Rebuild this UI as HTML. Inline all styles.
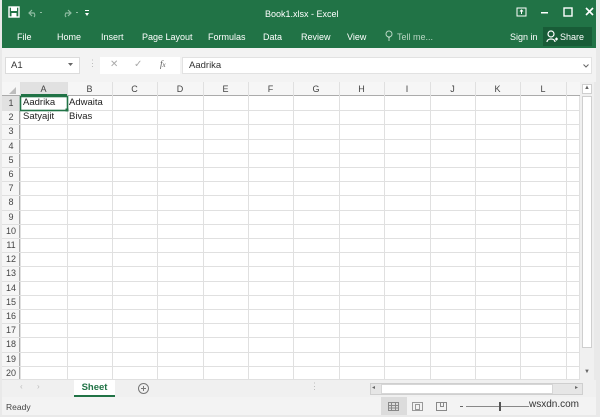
<!DOCTYPE html>
<html><head><style>
*{margin:0;padding:0;box-sizing:border-box}
body{width:600px;height:417px;overflow:hidden;background:#fff;font-family:"Liberation Sans",sans-serif;position:relative}
.a{position:absolute}
.t{color:#fff;font-size:9px;white-space:nowrap}
.ch{position:absolute;top:82px;height:14px;font-size:9px;color:#444;text-align:center;line-height:14px}
.rh{position:absolute;left:2px;width:18px;font-size:9px;color:#444;text-align:center;line-height:14px;height:14px}
.c{position:absolute;font-size:9.5px;color:#222;line-height:14px}
</style></head><body>
<div class="a" style="left:0;top:0;width:600px;height:417px;background:#e9e9e9"></div>
<div class="a" style="left:2px;top:0;width:594px;height:48px;background:#217346"></div>
<svg class="a" style="left:8px;top:6px" width="90" height="14">
<rect x="1" y="1" width="10" height="10" fill="none" stroke="#fff" stroke-width="1.4"/><rect x="3" y="1" width="6" height="4" fill="#fff"/><rect x="3.5" y="7" width="5" height="4" fill="#fff"/>
<path d="M24 4 l-3 3 3 3 M21 7 h5 a3 3 0 0 1 0 4" stroke="#8fbda2" fill="none" stroke-width="1.2"/><rect x="32" y="6" width="2" height="1" fill="#8fbda2"/>
<path d="M60 4 l3 3 -3 3 M63 7 h-5 a3 3 0 0 0 0 4" stroke="#8fbda2" fill="none" stroke-width="1.2"/><rect x="68" y="6" width="2" height="1" fill="#8fbda2"/>
<rect x="77" y="4" width="4" height="1" fill="#fff"/><path d="M77 7h4l-2 3z" fill="#fff"/>
</svg>
<div class="a t" style="left:265px;top:9px">Book1.xlsx - Excel</div>
<svg class="a" style="left:515px;top:6px" width="80" height="14">
<rect x="2" y="2" width="9" height="8" fill="none" stroke="#fff"/><path d="M6.5 4v4M5 5.5l1.5-1.5 1.5 1.5" stroke="#fff" fill="none"/>
<rect x="26" y="6" width="7" height="1.5" fill="#fff"/>
<rect x="49" y="2" width="8" height="8" fill="none" stroke="#fff" stroke-width="1.4"/>
<path d="M71 2l7 7M78 2l-7 7" stroke="#fff" stroke-width="1.6"/>
</svg>
<div class="a t" style="left:17px;top:32px">File</div>
<div class="a t" style="left:57px;top:32px">Home</div>
<div class="a t" style="left:101px;top:32px">Insert</div>
<div class="a t" style="left:142px;top:32px">Page Layout</div>
<div class="a t" style="left:208px;top:32px">Formulas</div>
<div class="a t" style="left:263px;top:32px">Data</div>
<div class="a t" style="left:301px;top:32px">Review</div>
<div class="a t" style="left:347px;top:32px">View</div>
<svg class="a" style="left:385px;top:30px" width="10" height="12"><circle cx="4" cy="4" r="3" fill="none" stroke="#b9d6c4"/><path d="M3 8h2M3 10h2" stroke="#b9d6c4"/></svg>
<div class="a t" style="left:397px;top:32px;color:#b9d6c4">Tell me...</div>
<div class="a t" style="left:510px;top:32px">Sign in</div>
<div class="a" style="left:543px;top:27px;width:49px;height:19px;background:#185c37"></div>
<svg class="a" style="left:546px;top:30px" width="12" height="13"><circle cx="5" cy="4" r="3" fill="none" stroke="#fff" stroke-width="1.2"/><path d="M1 12c0-4 8-4 8 0M9 9h3M10.5 7.5v3" stroke="#fff" fill="none" stroke-width="1.2"/></svg>
<div class="a t" style="left:560px;top:32px">Share</div>
<div class="a" style="left:2px;top:48px;width:594px;height:34px;background:#f3f3f3"></div>
<div class="a" style="left:5px;top:57px;width:75px;height:17px;background:#fff;border:1px solid #dcdcdc"></div>
<div class="a" style="left:11px;top:60px;font-size:9.5px;color:#333">A1</div>
<svg class="a" style="left:68px;top:63px" width="6" height="4"><path d="M0 0h5l-2.5 3z" fill="#666"/></svg>
<div class="a" style="left:88px;top:58px;font-size:9px;color:#bbb">⋮</div>
<div class="a" style="left:100px;top:57px;width:80px;height:17px;background:#fff"></div>
<div class="a" style="left:110px;top:59px;font-size:10px;color:#aaa">✕</div>
<div class="a" style="left:134px;top:59px;font-size:10px;color:#aaa">✓</div>
<div class="a" style="left:160px;top:59px;font-size:9px;color:#555;font-style:italic;font-family:'Liberation Serif',serif">f<span style="font-size:7px">x</span></div>
<div class="a" style="left:182px;top:57px;width:410px;height:17px;background:#fff;border:1px solid #e2e2e2"></div>
<div class="a" style="left:189px;top:60px;font-size:9.5px;color:#333">Aadrika</div>
<svg class="a" style="left:583px;top:64px" width="6" height="4"><path d="M0.5 0.5l2.5 2.5 2.5-2.5" stroke="#666" fill="none"/></svg>
<div class="a" style="left:2px;top:82px;width:578px;height:298px;background:#fff"></div>
<div class="a" style="left:2px;top:82px;width:578px;height:14px;background:#f6f6f6;border-bottom:1px solid #ababab"></div>
<div class="a" style="left:2px;top:96px;width:18px;height:284px;background:#f6f6f6;border-right:1px solid #ababab"></div>
<div class="a" style="left:20px;top:82px;width:47px;height:14px;background:#e1e1e1;border-bottom:2px solid #217346"></div>
<div class="a" style="left:2px;top:96px;width:18px;height:14px;background:#e1e1e1"></div>
<svg class="a" style="left:0;top:82px" width="600" height="300">
<path d="M9 12l7-7v7z" fill="#bdbdbd"/>
<g stroke="#e0e0e0" stroke-width="1">
<path d="M20.5 0V298M67.5 0V298M112.5 0V298M157.5 0V298M203.5 0V298M248.5 0V298M293.5 0V298M339.5 0V298M384.5 0V298M430.5 0V298M475.5 0V298M520.5 0V298M566.5 0V298M579.5 14V298"/>
<path d="M2 28.5H580M2 42.5H580M2 57.5H580M2 71.5H580M2 85.5H580M2 99.5H580M2 113.5H580M2 128.5H580M2 142.5H580M2 156.5H580M2 170.5H580M2 184.5H580M2 199.5H580M2 213.5H580M2 227.5H580M2 241.5H580M2 255.5H580M2 270.5H580M2 284.5H580M2 297.5H580"/>
</g>
<rect x="20.5" y="14.5" width="47" height="14" fill="none" stroke="#217346" stroke-width="1.6"/>
<rect x="65.5" y="26.5" width="3" height="3" fill="#217346"/>
</svg>
<div class="ch" style="left:20px;width:47px">A</div>
<div class="ch" style="left:67px;width:45px">B</div>
<div class="ch" style="left:112px;width:45px">C</div>
<div class="ch" style="left:157px;width:46px">D</div>
<div class="ch" style="left:203px;width:45px">E</div>
<div class="ch" style="left:248px;width:45px">F</div>
<div class="ch" style="left:293px;width:46px">G</div>
<div class="ch" style="left:339px;width:45px">H</div>
<div class="ch" style="left:384px;width:46px">I</div>
<div class="ch" style="left:430px;width:45px">J</div>
<div class="ch" style="left:475px;width:45px">K</div>
<div class="ch" style="left:520px;width:46px">L</div>
<div class="rh" style="top:96px">1</div><div class="rh" style="top:110px">2</div><div class="rh" style="top:124px">3</div><div class="rh" style="top:139px">4</div><div class="rh" style="top:153px">5</div><div class="rh" style="top:167px">6</div><div class="rh" style="top:181px">7</div><div class="rh" style="top:195px">8</div><div class="rh" style="top:210px">9</div><div class="rh" style="top:224px">10</div><div class="rh" style="top:238px">11</div><div class="rh" style="top:252px">12</div><div class="rh" style="top:266px">13</div><div class="rh" style="top:281px">14</div><div class="rh" style="top:295px">15</div><div class="rh" style="top:309px">16</div><div class="rh" style="top:323px">17</div><div class="rh" style="top:337px">18</div><div class="rh" style="top:352px">19</div><div class="rh" style="top:366px">20</div>
<div class="c" style="left:23px;top:96px">Aadrika</div>
<div class="c" style="left:69px;top:96px">Adwaita</div>
<div class="c" style="left:23px;top:110px">Satyajit</div>
<div class="c" style="left:69px;top:110px">Bivas</div>
<div class="a" style="left:580px;top:82px;width:14px;height:298px;background:#f0f0f0"></div>
<div class="a" style="left:582px;top:96px;width:10px;height:252px;background:#fff;border:1px solid #cfcfcf"></div>
<div class="a" style="left:582px;top:84px;width:10px;height:10px;border:1px solid #cfcfcf;background:#fff;font-size:6px;text-align:center;color:#666">▲</div>
<div class="a" style="left:584px;top:369px;font-size:6px;color:#666">▼</div>
<div class="a" style="left:2px;top:380px;width:594px;height:17px;background:#f0f0f0"></div>
<div class="a" style="left:20px;top:382px;font-size:8px;color:#bbb">‹</div>
<div class="a" style="left:37px;top:382px;font-size:8px;color:#bbb">›</div>
<div class="a" style="left:74px;top:380px;width:41px;height:17px;background:#fff;border-bottom:2px solid #217346;font-size:9.5px;font-weight:bold;color:#217346;text-align:center;line-height:16px">Sheet</div>
<svg class="a" style="left:137px;top:382px" width="13" height="13"><circle cx="6.5" cy="6.5" r="5" fill="none" stroke="#777"/><path d="M6.5 4v5M4 6.5h5" stroke="#777"/></svg>
<div class="a" style="left:310px;top:381px;font-size:9px;color:#bbb">⋮</div>
<div class="a" style="left:370px;top:383px;width:213px;height:12px;background:#e6e6e6;border:1px solid #cfcfcf"></div>
<div class="a" style="left:381px;top:384px;width:172px;height:10px;background:#fff;border:1px solid #d6d6d6"></div>
<div class="a" style="left:372px;top:384px;font-size:6px;color:#666">◂</div>
<div class="a" style="left:575px;top:384px;font-size:6px;color:#666">▸</div>
<div class="a" style="left:2px;top:397px;width:594px;height:18px;background:#f3f3f3"></div>
<div class="a" style="left:6px;top:402px;font-size:8.5px;color:#444">Ready</div>
<div class="a" style="left:381px;top:397px;width:26px;height:18px;background:#dcdcdc"></div>
<svg class="a" style="left:388px;top:401px" width="200" height="12">
<path d="M0.5 1.5h10v8h-10zM3.5 1.5v8M7.5 1.5v8M0.5 4.5h10M0.5 7h10" stroke="#888" fill="none"/>
<rect x="24.5" y="1.5" width="10" height="8" fill="none" stroke="#999"/><rect x="27.5" y="3.5" width="4" height="5" fill="none" stroke="#999"/>
<path d="M48.5 1.5h10v8h-10zM52.5 1.5v4h3v-4" stroke="#888" fill="none"/>
<rect x="72" y="5" width="3" height="1" fill="#666"/><rect x="78" y="5" width="90" height="1" fill="#888"/><rect x="111" y="1" width="2" height="9" fill="#555"/>
</svg>
<div class="a" style="left:529px;top:399px;font-size:10px;color:#333;background:#f3f3f3">wsxdn.com</div>
</body></html>
